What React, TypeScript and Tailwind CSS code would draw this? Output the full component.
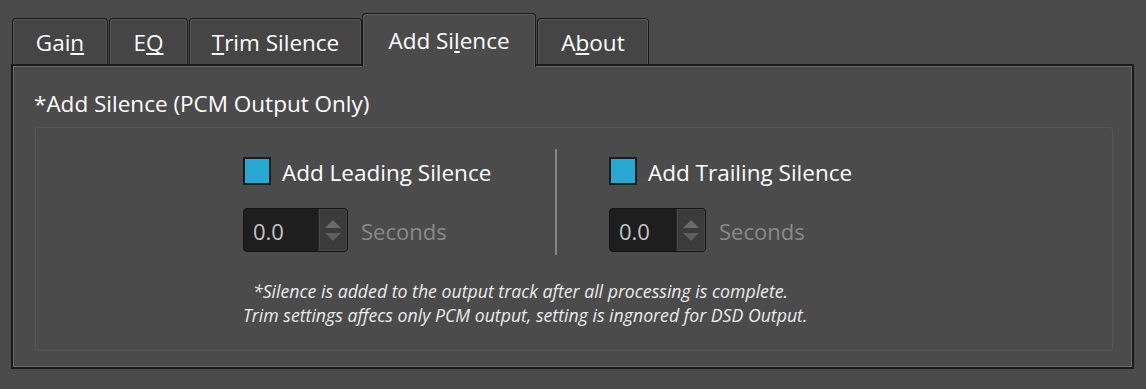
import React from "react";

const font = { fontFamily: '"Open Sans", "Noto Sans", sans-serif' };

function Tab({ children, w, selected = false, ml = 0 }: { children: React.ReactNode; w: number; selected?: boolean; ml?: number }) {
  if (selected) {
    return (
      <div
        className="relative z-10 h-[54px] -mb-[3px] rounded-t-[4px] border border-b-0 border-[#1a1a1a] bg-[#4b4b4b] shadow-[inset_1px_1px_0_#5e5e5e,inset_-1px_0_0_#5e5e5e] flex items-start justify-center pt-[13px] text-white text-[22.5px] leading-[28px] [text-decoration-skip-ink:none]"
        style={{ width: w, marginLeft: ml }}
      >
        {children}
      </div>
    );
  }
  return (
    <div
      className="h-[46px] rounded-t-[4px] border border-b-0 border-[#1a1a1a] bg-[#454545] shadow-[inset_1px_1px_0_#585858,inset_-1px_0_0_#585858] flex items-start justify-center pt-[10px] text-white text-[22.5px] leading-[28px] [text-decoration-skip-ink:none]"
      style={{ width: w, marginLeft: ml }}
    >
      {children}
    </div>
  );
}

function SpinBox({ wide }: { wide: boolean }) {
  return (
    <div className="flex items-center">
      <div className={`${wide ? "w-[105px]" : "w-[97px]"} h-[44px] rounded-[4px] bg-[#1e1e1e] border border-[#141414] flex overflow-hidden`}>
        <div className="flex-1 flex items-center pl-[9px] pt-[1px] text-[#c4c4c4] text-[22px] leading-[28px]">0.0</div>
        <div className="w-[29px] h-full bg-[#3b3b3b] border-l border-[#2a2a2a] rounded-r-[3px] shadow-[inset_0_0_0_1px_#474747] flex flex-col items-center justify-center gap-[5px]">
          <svg width="16" height="8" viewBox="0 0 16 8"><path d="M0 8 L8 0 L16 8 Z" fill="#6a6a6a" /></svg>
          <svg width="16" height="8" viewBox="0 0 16 8"><path d="M0 0 L16 0 L8 8 Z" fill="#5e5e5e" /></svg>
        </div>
      </div>
      <span className="ml-[13px] pt-[1px] text-[#8a8a8a] text-[22px] leading-[28px]">Seconds</span>
    </div>
  );
}

function CheckRow({ label }: { label: string }) {
  return (
    <div className="flex items-center h-[28px]">
      <div className="w-[28px] h-[28px] bg-[#28a9d2] border-2 border-[#1c1c1c]" />
      <span className="ml-[11px] pt-[3px] text-white text-[22.5px] leading-[28px]">{label}</span>
    </div>
  );
}

export default function App() {
  return (
    <div className="w-[1146px] h-[389px] bg-[#4b4b4b] overflow-hidden" style={font}>
      <div className="h-[64px] flex items-end pl-[12px]">
        <Tab w={96}><span>Gai<u>n</u></span></Tab>
        <Tab w={79} ml={1}><span>E<u>Q</u></span></Tab>
        <Tab w={173} ml={1}><span><u>T</u>rim Silence</span></Tab>
        <Tab w={174} selected><span>Add Si<u>l</u>ence</span></Tab>
        <Tab w={112} ml={1}><span>A<u>b</u>out</span></Tab>
      </div>
      <div className="ml-[11px] w-[1123px] h-[305px] border-2 border-[#1a1a1a] shadow-[inset_0_0_0_1px_#6a6a6a]">
        <div className="pl-[21px] pt-[24px] h-[61px] text-white text-[22.5px] leading-[28px]">*Add Silence (PCM Output Only)</div>
        <div className="ml-[22px] w-[1078px] h-[224px] rounded-[3px] border border-[#565656]">
          <div className="flex pl-[207px] pt-[21px]">
            <div className="w-[312px] pt-[8px] flex flex-col">
              <CheckRow label="Add Leading Silence" />
              <div className="mt-[23px]"><SpinBox wide /></div>
            </div>
            <div className="w-[2px] h-[106px] bg-[#858585]" />
            <div className="ml-[52px] pt-[8px] flex flex-col">
              <CheckRow label="Add Trailing Silence" />
              <div className="mt-[23px]"><SpinBox wide={false} /></div>
            </div>
          </div>
          <div className="mt-[24px] italic text-[#ececec] text-[17.7px] leading-[24px]">
            <div className="pl-[217px]">*Silence is added to the output track after all processing is complete.</div>
            <div className="pl-[207px]">Trim settings affecs only PCM output, setting is ingnored for DSD Output.</div>
          </div>
        </div>
      </div>
    </div>
  );
}
